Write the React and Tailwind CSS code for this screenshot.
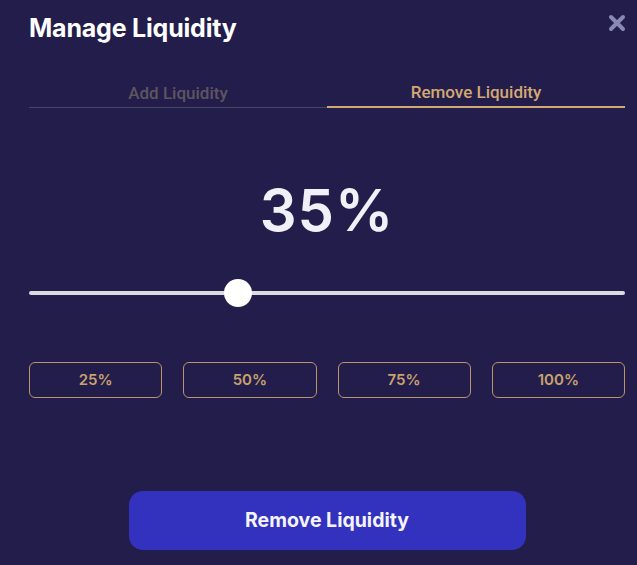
import { useState } from "react";

function App() {
  const [tab, setTab] = useState("remove");
  const [value, setValue] = useState(35);

  return (
    <div className="w-[637px] h-[565px] bg-[#221d4a] overflow-hidden relative" style={{ fontFamily: "Inter, 'Liberation Sans', sans-serif" }}>
      <div className="pl-[29px] pr-[12px] pt-[12px] flex flex-col">
        <h2 className="text-[25px] font-bold text-white leading-[32px] tracking-[-0.2px]">
          Manage Liquidity
        </h2>

        <div className="mt-[37px] flex">
          <button
            className={`flex-1 pb-[3px] text-[17px] font-medium leading-[22px] ${tab === "add" ? "text-[#d4a872] border-b-2 border-[#d4a872]" : "text-[#5f5561] border-b border-[#4a4466]"}`}
            style={{ fontFamily: "Roboto, sans-serif" }}
            onClick={() => setTab("add")}
          >
            Add Liquidity
          </button>
          <button
            className={`flex-1 pb-[3px] text-[17px] font-medium leading-[22px] ${tab === "remove" ? "text-[#d4a872] border-b-2 border-[#d4a872]" : "text-[#5f5561] border-b border-[#4a4466]"}`}
            style={{ fontFamily: "Roboto, sans-serif" }}
            onClick={() => setTab("remove")}
          >
            Remove Liquidity
          </button>
        </div>

        <div className="mt-[70px] text-center text-[58px] font-semibold leading-[64px] text-[#f1f0f6] tracking-[1px]">
          {value}%
        </div>

        <div className="mt-[37px] relative h-[28px] flex items-center">
          <div className="w-full h-[4px] bg-[#dcdbdf] rounded-full" />
          <div
            className="absolute top-0 w-[28px] h-[28px] rounded-full bg-white"
            style={{ left: `calc(${value}% - 14px)` }}
          />
        </div>

        <div className="mt-[55px] grid grid-cols-4 gap-[21px]">
          {[25, 50, 75, 100].map((p) => (
            <button
              key={p}
              onClick={() => setValue(p)}
              className="h-[36px] rounded-[6px] border border-[#b8956a] text-[#c9a16f] text-[15px] font-semibold"
            >
              {p}%
            </button>
          ))}
        </div>

        <div className="mt-[93px] flex justify-center">
          <button className="w-[397px] h-[59px] rounded-[14px] bg-[#3332be] text-[#f5f4fb] text-[19.5px] font-bold">
            Remove Liquidity
          </button>
        </div>
      </div>

      <button className="absolute top-[14px] right-[11px] text-[#8a89b4]">
        <svg width="18" height="18" viewBox="0 0 18 18">
          <path d="M3 3 L15 15 M15 3 L3 15" stroke="currentColor" strokeWidth="4" strokeLinecap="round" />
        </svg>
      </button>
    </div>
  );
}

export default App;
